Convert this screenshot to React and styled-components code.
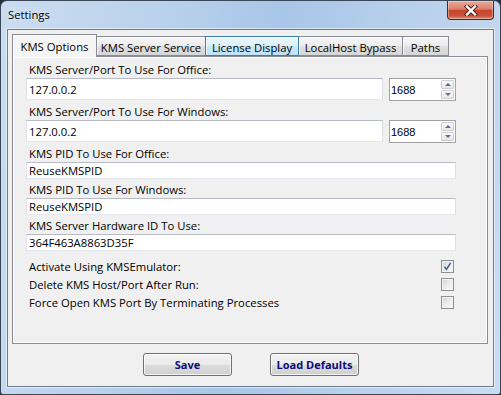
import styled, { createGlobalStyle } from "styled-components";

const GlobalStyle = createGlobalStyle`
  html, body {
    margin: 0;
    padding: 0;
    background: #26303a;
  }
  body {
    width: 501px;
    height: 395px;
    overflow: hidden;
    font-family: "Open Sans", "Noto Sans", sans-serif;
  }
  * {
    box-sizing: border-box;
  }
`;

const Window = styled.div`
  width: 501px;
  height: 395px;
  display: flex;
  flex-direction: column;
  border: 1px solid #3a4756;
  border-radius: 7px 7px 3px 3px;
  overflow: hidden;
  background: linear-gradient(
    100deg,
    #cadcf0 0%,
    #bcd3ec 25%,
    #a8c6e7 50%,
    #b6cfeb 70%,
    #cadcf1 100%
  );
`;

const TitleBar = styled.div`
  height: 28px;
  display: flex;
  align-items: flex-start;
  padding-left: 7px;
`;

const Title = styled.span`
  margin-top: 6px;
  font-size: 11.3px;
  line-height: 16px;
  color: #000;
  text-shadow: 0 0 6px rgba(255, 255, 255, 0.9);
`;

const CloseButton = styled.div`
  margin-left: auto;
  margin-right: 6px;
  width: 47px;
  height: 19px;
  display: grid;
  place-items: center;
  border: 1px solid #5e2118;
  border-top: none;
  border-radius: 0 0 4px 4px;
  background: linear-gradient(
    #e9a899 0%,
    #dc806b 45%,
    #c7452c 52%,
    #c94f36 80%,
    #dc8a74 100%
  );
  box-shadow: inset 0 0 0 1px rgba(255, 255, 255, 0.35);
`;

const ClientArea = styled.div`
  flex: 1;
  margin: 0 6px 7px;
  display: flex;
  flex-direction: column;
  padding: 4px 5px 0 4px;
  background: #f0f0f0;
  border: 1px solid #6b7b8c;
  box-shadow: 0 0 0 1px rgba(255, 255, 255, 0.55);
`;

const TabStrip = styled.div`
  height: 22px;
  display: flex;
  align-items: flex-end;
`;

const Tab = styled.div`
  position: relative;
  width: ${(p) => p.$w}px;
  height: ${(p) => (p.$active ? 23 : 20)}px;
  margin-bottom: ${(p) => (p.$active ? -1 : 0)}px;
  margin-left: -1px;
  padding-top: ${(p) => (p.$active ? 0 : 2)}px;
  display: flex;
  align-items: center;
  justify-content: center;
  font-size: 11.3px;
  color: #000;
  white-space: nowrap;
  border: 1px solid ${(p) => (p.$hot ? "#3c7fb1" : "#898c95")};
  border-bottom: ${(p) => (p.$active ? "none" : `1px solid ${p.$hot ? "#3c7fb1" : "#898c95"}`)};
  z-index: ${(p) => (p.$active ? 3 : p.$hot ? 2 : 1)};
  background: ${(p) =>
    p.$active
      ? "#f5f5f5"
      : p.$hot
      ? "linear-gradient(#eef7fd, #dcf0fb 50%, #c8e8fb 51%, #bfe2f8)"
      : "linear-gradient(#f6f6f6, #ececec 50%, #e0e0e0 51%, #d6d6d6)"};
  box-shadow: inset 1px 1px 0 rgba(255, 255, 255, 0.7);

  &:first-child {
    margin-left: 0;
  }
`;

const Panel = styled.div`
  position: relative;
  z-index: 1;
  height: 288px;
  display: flex;
  flex-direction: column;
  gap: 3px;
  padding: 5px 31px 0 13px;
  border: 1px solid #898c95;
  box-shadow: inset 0 0 0 1px #fff;
  background: #f0f0f0;
`;

const Field = styled.div`
  display: flex;
  flex-direction: column;
`;

const Label = styled.div`
  height: 16px;
  line-height: 16px;
  padding-left: 3px;
  font-size: 11.3px;
  color: #000;
  white-space: nowrap;
`;

const Controls = styled.div`
  display: flex;
  align-items: flex-start;
  gap: 6px;
`;

const TextBox = styled.input`
  flex: 1;
  min-width: 0;
  height: ${(p) => (p.$tall ? 22 : 21)}px;
  padding: 0 2px;
  margin: 0;
  font-family: "Open Sans", "Noto Sans", sans-serif;
  font-size: 11.3px;
  color: #000;
  background: #fff;
  border: 1px solid;
  border-color: #b7bcc4 #dbdfe6 #e3e9ef #e2e3ea;
  border-radius: 0;
  outline: none;
`;

const Spinner = styled.div`
  width: 67px;
  height: 23px;
  display: flex;
  align-items: center;
  background: #fff;
  border: 1px solid #a2a2a2;
`;

const SpinValue = styled.span`
  flex: 1;
  padding-left: 1px;
  font-family: "Liberation Sans", Arial, sans-serif;
  font-size: 11px;
  color: #000;
`;

const SpinButtons = styled.div`
  align-self: stretch;
  display: flex;
  flex-direction: column;
  gap: 1px;
  padding: 1px 1px 1px 0;
`;

const SpinButton = styled.div`
  width: 13px;
  flex: 1;
  display: grid;
  place-items: center;
  border: 1px solid #cfcfcf;
  border-radius: 1px;
  background: linear-gradient(#fafafa, #e6e6e6);

  &::after {
    content: "";
    width: 0;
    height: 0;
    border-left: 3px solid transparent;
    border-right: 3px solid transparent;
    ${(p) =>
      p.$down ? "border-top: 3px solid #5569a6;" : "border-bottom: 3px solid #5569a6;"}
  }
`;

const CheckGroup = styled.div`
  margin-top: 3px;
  display: flex;
  flex-direction: column;
`;

const CheckRow = styled.div`
  height: 18px;
  display: flex;
  align-items: center;
  justify-content: space-between;
  padding: 0 2px 0 3px;
  font-size: 11.3px;
  color: #000;
`;

const Box = styled.div`
  width: 13px;
  height: 13px;
  display: grid;
  place-items: center;
  border: 1px solid #8e8f8f;
  background: linear-gradient(135deg, #cdd0d4 0%, #e8e9ea 45%, #fbfbfb 100%);
  box-shadow: inset 0 0 0 1px #f3f3f3;
`;

const ButtonRow = styled.div`
  display: flex;
  justify-content: center;
  gap: 38px;
  padding: 9px 0 0 2px;
`;

const Button = styled.button`
  width: 89px;
  height: 23px;
  padding: 0;
  font-family: "Open Sans", "Noto Sans", sans-serif;
  font-size: 11px;
  font-weight: 700;
  color: #0c0c7a;
  border: 1px solid #707070;
  border-radius: 3px;
  background: linear-gradient(#f2f2f2 0%, #ebebeb 50%, #dddddd 51%, #cfcfcf 100%);
  box-shadow: inset 0 0 0 1px rgba(255, 255, 255, 0.75);
`;

const tabs = [
  { label: "KMS Options", w: 85, active: true },
  { label: "KMS Server Service", w: 110 },
  { label: "License Display", w: 94, hot: true },
  { label: "LocalHost Bypass", w: 105 },
  { label: "Paths", w: 47 },
];

function PortSpinner({ value }) {
  return (
    <Spinner>
      <SpinValue>{value}</SpinValue>
      <SpinButtons>
        <SpinButton />
        <SpinButton $down />
      </SpinButtons>
    </Spinner>
  );
}

function Check({ label, checked }) {
  return (
    <CheckRow>
      <span>{label}</span>
      <Box>
        {checked && (
          <svg width="9" height="9" viewBox="0 0 9 9">
            <path
              d="M1.5 4.8 L3.5 7.4 L7.6 0.8"
              fill="none"
              stroke="#4a5c9a"
              strokeWidth="1.5"
            />
          </svg>
        )}
      </Box>
    </CheckRow>
  );
}

export default function App() {
  return (
    <>
      <GlobalStyle />
      <Window>
        <TitleBar>
          <Title>Settings</Title>
          <CloseButton>
            <svg width="14" height="11" viewBox="0 0 14 11">
              <path
                d="M3 1.5 L11 9.5 M11 1.5 L3 9.5"
                stroke="#4a1e16"
                strokeWidth="4.2"
                strokeLinecap="square"
              />
              <path
                d="M3 1.5 L11 9.5 M11 1.5 L3 9.5"
                stroke="#fff"
                strokeWidth="2.4"
                strokeLinecap="square"
              />
            </svg>
          </CloseButton>
        </TitleBar>
        <ClientArea>
          <TabStrip>
            {tabs.map((t) => (
              <Tab key={t.label} $w={t.w} $active={t.active} $hot={t.hot}>
                {t.label}
              </Tab>
            ))}
          </TabStrip>
          <Panel>
            <Field>
              <Label>KMS Server/Port To Use For Office:</Label>
              <Controls>
                <TextBox $tall readOnly defaultValue="127.0.0.2" />
                <PortSpinner value="1688" />
              </Controls>
            </Field>
            <Field>
              <Label>KMS Server/Port To Use For Windows:</Label>
              <Controls>
                <TextBox $tall readOnly defaultValue="127.0.0.2" />
                <PortSpinner value="1688" />
              </Controls>
            </Field>
            <Field>
              <Label>KMS PID To Use For Office:</Label>
              <TextBox readOnly defaultValue="ReuseKMSPID" />
            </Field>
            <Field>
              <Label>KMS PID To Use For Windows:</Label>
              <TextBox readOnly defaultValue="ReuseKMSPID" />
            </Field>
            <Field>
              <Label>KMS Server Hardware ID To Use:</Label>
              <TextBox readOnly defaultValue="364F463A8863D35F" />
            </Field>
            <CheckGroup>
              <Check label="Activate Using KMSEmulator:" checked />
              <Check label="Delete KMS Host/Port After Run:" />
              <Check label="Force Open KMS Port By Terminating Processes" />
            </CheckGroup>
          </Panel>
          <ButtonRow>
            <Button>Save</Button>
            <Button>Load Defaults</Button>
          </ButtonRow>
        </ClientArea>
      </Window>
    </>
  );
}
